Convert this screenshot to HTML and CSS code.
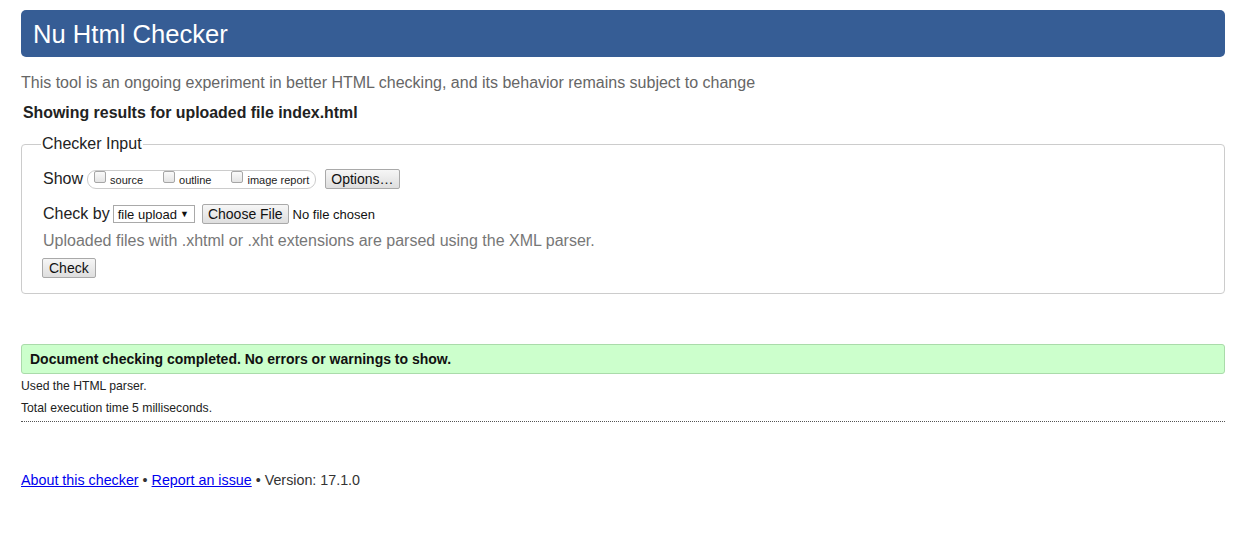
FILE: index.html
```html
<!DOCTYPE html>
<html>
<head>
<meta charset="utf-8">
<title>Nu Html Checker</title>
<link rel="stylesheet" href="styles.css">
</head>
<body>
<div class="page">
  <header class="banner"><h1 class="title">Nu Html Checker</h1></header>
  <p class="intro">This tool is an ongoing experiment in better HTML checking, and its behavior remains subject to change</p>
  <p class="showing">Showing results for uploaded file index.html</p>
  <fieldset class="input">
    <legend class="legend">Checker Input</legend>
    <div class="row show-row">
      <span class="lbl">Show</span>
      <span class="pill">
        <label class="opt"><span class="cb"></span>source</label>
        <label class="opt"><span class="cb"></span>outline</label>
        <label class="opt last"><span class="cb"></span>image report</label>
      </span>
      <button class="btn options">Options…</button>
    </div>
    <div class="row by-row">
      <span class="lbl">Check by</span>
      <span class="select">file upload <span class="arrow">▼</span></span>
      <button class="btn choose">Choose File</button>
      <span class="nofile">No file chosen</span>
    </div>
    <p class="hint">Uploaded files with .xhtml or .xht extensions are parsed using the XML parser.</p>
    <button class="btn check">Check</button>
  </fieldset>
  <div class="success">Document checking completed. No errors or warnings to show.</div>
  <p class="meta">Used the HTML parser.</p>
  <p class="meta">Total execution time 5 milliseconds.</p>
  <hr class="sep">
  <p class="footer"><a href="#">About this checker</a> • <a href="#">Report an issue</a> • Version: 17.1.0</p>
</div>
</body>
</html>
```
FILE: styles.css
```css
* { box-sizing: border-box; }
html, body { margin: 0; padding: 0; background: #fff; }
body { font-family: "Liberation Sans", Arial, sans-serif; color: #222; }
.page { padding: 10px 12px 0 21px; }
.banner {
  background: #365d95;
  border-radius: 5px;
  height: 47px;
  display: flex;
  align-items: center;
  padding-left: 12px;
}
.title { margin: 0; color: #fff; font-weight: normal; font-size: 25.6px; line-height: 30px; }
.intro { margin: 17px 0 0 0; font-size: 16px; line-height: 18px; color: #666; }
.showing { margin: 12px 0 0 2px; font-size: 15.9px; line-height: 18px; font-weight: bold; color: #222; }
.input {
  margin: 13px 0 0 0;
  border: 1px solid #ccc;
  border-radius: 4px;
  padding: 6px 20px 15px 21px;
  min-width: 0;
}
.legend { padding: 0 1px; margin-left: -2px; font-size: 16px; line-height: 18px; color: #222; }
.row { display: flex; align-items: center; }
.lbl { font-size: 16px; color: #222; }
.show-row { height: 22px; margin-top: 9px; }
.pill {
  display: inline-flex;
  align-items: center;
  margin-left: 4px;
  height: 19px;
  border: 1px solid #ccc;
  border-radius: 9px;
  padding: 0 6px 0 6px;
  font-size: 11px;
  color: #222;
}
.opt { display: inline-flex; align-items: center; margin-right: 20px; position: relative; top: 1px; }
.opt.last { margin-right: 0; }
.cb {
  display: inline-block;
  width: 12px; height: 12px;
  border: 1px solid #a6a6a6;
  border-radius: 2px;
  background: linear-gradient(#fafafa, #e4e4e4);
  margin-right: 4px;
  position: relative; top: -3px;
}
.btn {
  font-family: "Liberation Sans", Arial, sans-serif;
  font-size: 14px;
  color: #111;
  background: linear-gradient(#f6f6f6, #dedede);
  border: 1px solid #a9a9a9;
  border-radius: 2px;
  padding: 0 8px;
  height: 20px;
  line-height: 18px;
}
.options { margin-left: 9px; padding: 0 5px; }
.by-row { margin-top: 13px; height: 22px; }
.select {
  margin-left: 3px;
  display: inline-flex;
  align-items: center;
  height: 18px;
  border: 1px solid #a9a9a9;
  font-size: 13px;
  padding: 0 5px 0 4px;
  background: #fff;
  color: #111;
}
.arrow { font-size: 9px; margin-left: 3px; }
.choose { margin-left: 7px; height: 20px; padding: 0 5px; }
.nofile { font-size: 13px; margin-left: 4px; color: #111; }
.hint { margin: 7px 0 0 0; font-size: 16px; line-height: 18px; color: #777; }
.check { margin-top: 8px; margin-left: -1px; display: block; padding: 0 6px; }
.success {
  margin-top: 50px;
  background: #ccffcc;
  border: 1px solid #aadbaa;
  border-radius: 3px;
  height: 30px;
  padding-left: 8px;
  display: flex;
  align-items: center;
  font-size: 14px;
  font-weight: bold;
  color: #111;
}
.meta { margin: 4px 0 0 0; font-size: 12.2px; line-height: 17px; color: #222; }
.meta + .meta { margin-top: 5px; }
.sep { margin: 4px 0 0 0; border: 0; border-top: 1px dotted #555; height: 0; }
.footer { margin: 50px 0 0 0; font-size: 14.3px; line-height: 16px; color: #333; }
.footer a { color: #00e; }
```
